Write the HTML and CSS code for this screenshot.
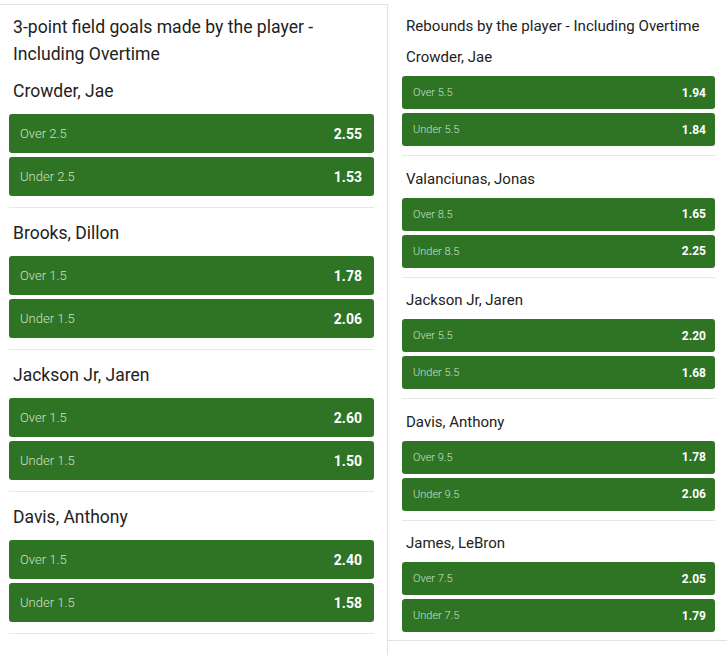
FILE: index.html
```html
<!DOCTYPE html>
<html>
<head>
<meta charset="utf-8">
<link rel="stylesheet" href="styles.css">
</head>
<body>
<div class="page">
  <section class="card left">
    <h2 class="title">3-point field goals made by the player - Including Overtime</h2>
    <div class="group">
      <div class="name">Crowder, Jae</div>
      <div class="btn"><span class="lbl">Over 2.5</span><span class="val">2.55</span></div>
      <div class="btn"><span class="lbl">Under 2.5</span><span class="val">1.53</span></div>
    </div>
    <div class="sep"></div>
    <div class="group">
      <div class="name">Brooks, Dillon</div>
      <div class="btn"><span class="lbl">Over 1.5</span><span class="val">1.78</span></div>
      <div class="btn"><span class="lbl">Under 1.5</span><span class="val">2.06</span></div>
    </div>
    <div class="sep"></div>
    <div class="group">
      <div class="name">Jackson Jr, Jaren</div>
      <div class="btn"><span class="lbl">Over 1.5</span><span class="val">2.60</span></div>
      <div class="btn"><span class="lbl">Under 1.5</span><span class="val">1.50</span></div>
    </div>
    <div class="sep"></div>
    <div class="group">
      <div class="name">Davis, Anthony</div>
      <div class="btn"><span class="lbl">Over 1.5</span><span class="val">2.40</span></div>
      <div class="btn"><span class="lbl">Under 1.5</span><span class="val">1.58</span></div>
    </div>
    <div class="sep"></div>
  </section>
  <section class="card right">
    <h2 class="title">Rebounds by the player - Including Overtime</h2>
    <div class="group">
      <div class="name">Crowder, Jae</div>
      <div class="btn"><span class="lbl">Over 5.5</span><span class="val">1.94</span></div>
      <div class="btn"><span class="lbl">Under 5.5</span><span class="val">1.84</span></div>
    </div>
    <div class="sep"></div>
    <div class="group">
      <div class="name">Valanciunas, Jonas</div>
      <div class="btn"><span class="lbl">Over 8.5</span><span class="val">1.65</span></div>
      <div class="btn"><span class="lbl">Under 8.5</span><span class="val">2.25</span></div>
    </div>
    <div class="sep"></div>
    <div class="group">
      <div class="name">Jackson Jr, Jaren</div>
      <div class="btn"><span class="lbl">Over 5.5</span><span class="val">2.20</span></div>
      <div class="btn"><span class="lbl">Under 5.5</span><span class="val">1.68</span></div>
    </div>
    <div class="sep"></div>
    <div class="group">
      <div class="name">Davis, Anthony</div>
      <div class="btn"><span class="lbl">Over 9.5</span><span class="val">1.78</span></div>
      <div class="btn"><span class="lbl">Under 9.5</span><span class="val">2.06</span></div>
    </div>
    <div class="sep"></div>
    <div class="group">
      <div class="name">James, LeBron</div>
      <div class="btn"><span class="lbl">Over 7.5</span><span class="val">2.05</span></div>
      <div class="btn"><span class="lbl">Under 7.5</span><span class="val">1.79</span></div>
    </div>
  </section>
</div>
</body>
</html>
```
FILE: styles.css
```css
html, body {
  margin: 0;
  padding: 0;
  background: #ffffff;
}
body {
  font-family: Roboto, "Liberation Sans", Arial, sans-serif;
  color: #222222;
  width: 727px;
  height: 655px;
  overflow: hidden;
}
.page {
  display: flex;
  align-items: flex-start;
  height: 655px;
}
.card {
  box-sizing: border-box;
  display: flex;
  flex-direction: column;
}
.title {
  margin: 0;
  font-weight: 400;
}
.name {
  font-weight: 400;
}
.btn {
  display: flex;
  justify-content: space-between;
  align-items: center;
  background: #2e7424;
  border-radius: 3px;
  box-sizing: border-box;
}
.lbl {
  color: #cfe0c9;
  font-weight: 300;
}
.val {
  color: #ffffff;
  font-weight: 700;
}
.sep {
  height: 1px;
  background: #e6e8e6;
}
.group {
  display: flex;
  flex-direction: column;
}

/* left panel */
.left {
  width: 388px;
  margin-top: 4px;
  height: 651px;
  border-top: 1px solid #e2e2e2;
  border-right: 1px solid #e2e2e2;
  padding: 9px 13px 0 9px;
}
.left .title {
  font-size: 17.6px;
  line-height: 27px;
  padding-left: 4px;
}
.left .name {
  font-size: 17.5px;
  line-height: 24px;
  padding-left: 4px;
  margin-top: 13px;
  margin-bottom: 11px;
}
.left .group:first-of-type .name {
  margin-top: 11px;
}
.left .btn {
  height: 39px;
  padding: 0 12px 0 11px;
}
.left .btn + .btn {
  margin-top: 4px;
}
.left .lbl {
  font-size: 13px;
}
.left .val {
  font-size: 14px;
}
.left .sep {
  margin-top: 11px;
}

/* right panel */
.right {
  flex: 1;
  height: 641px;
  border-bottom: 1px solid #e2e2e2;
  padding: 15px 12px 0 14px;
}
.right .title {
  font-size: 15.1px;
  line-height: 22px;
  padding-left: 4px;
}
.right .name {
  font-size: 15px;
  line-height: 22px;
  padding-left: 4px;
  margin-top: 11.5px;
  margin-bottom: 8px;
}
.right .group:first-of-type .name {
  margin-top: 9px;
}
.right .btn {
  height: 33px;
  padding: 0 9px 0 11px;
}
.right .btn + .btn {
  margin-top: 4px;
}
.right .lbl {
  font-size: 11px;
}
.right .val {
  font-size: 12px;
}
.right .sep {
  margin-top: 9px;
}
```
